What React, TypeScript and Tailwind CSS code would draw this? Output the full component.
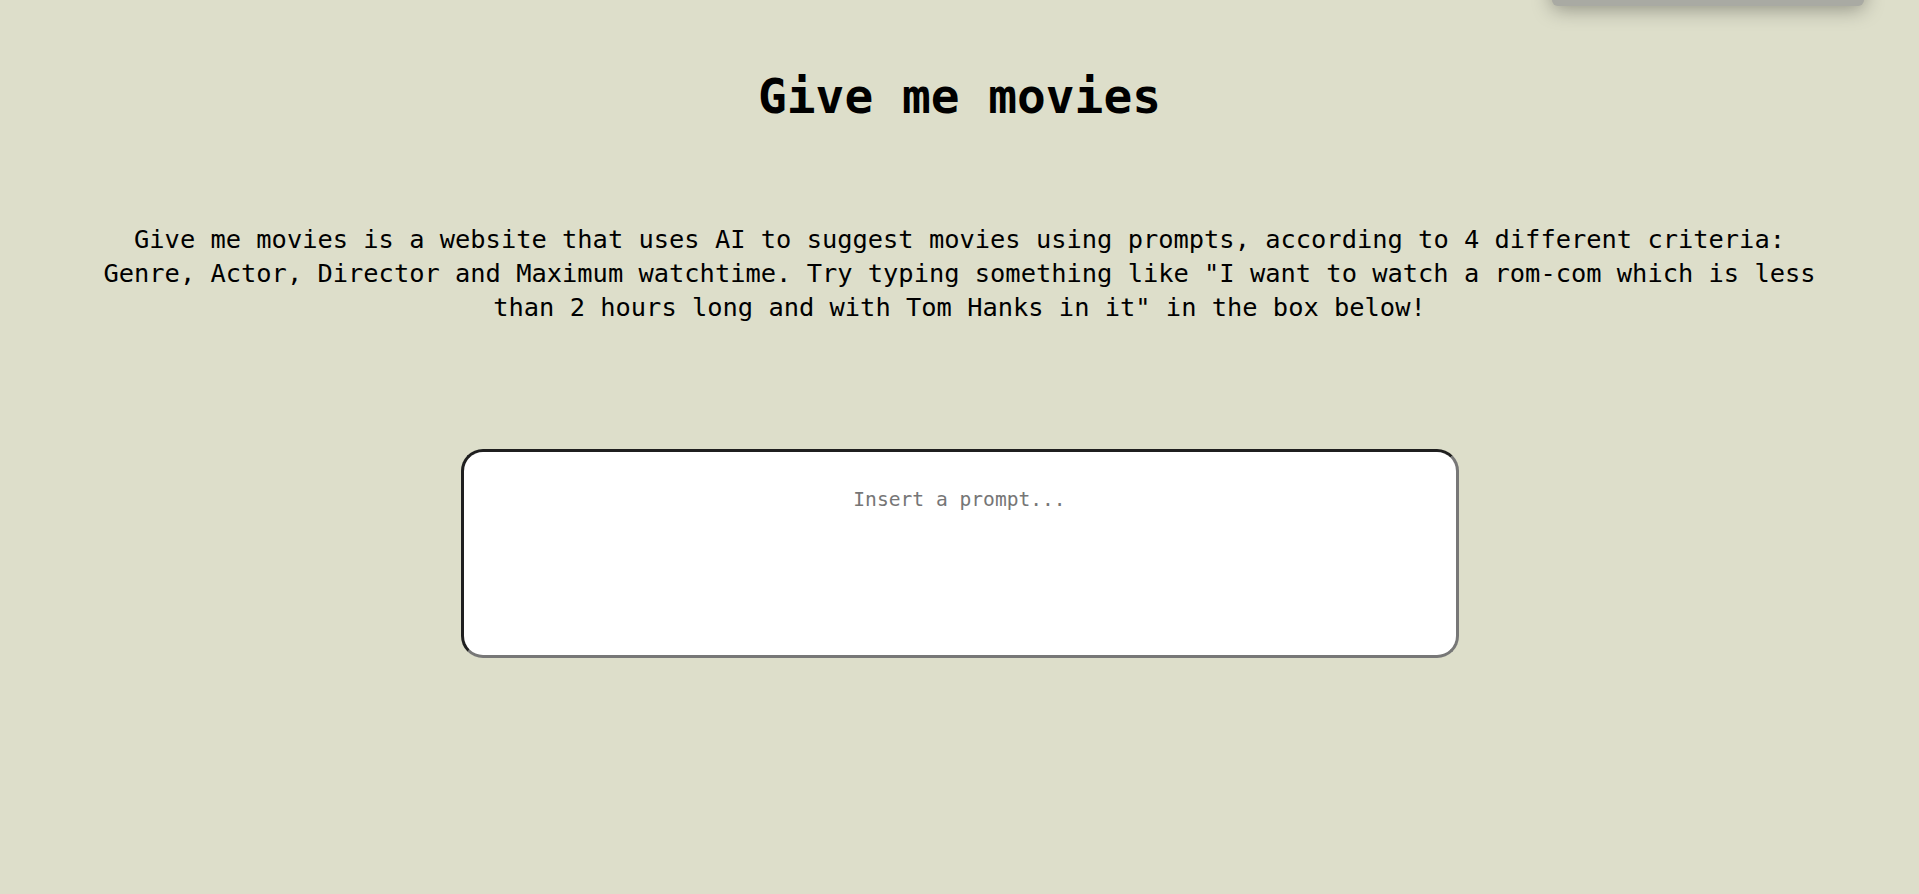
import { useState } from "react";

const mono = "font-['DejaVu_Sans_Mono','Liberation_Mono',monospace]";

const App = () => {
  const [prompt, setPrompt] = useState("");

  return (
    <div className={`relative min-h-[894px] overflow-hidden bg-[#dddeca] text-black ${mono}`}>
      {/* menu peeking down from above the viewport */}
      <div className="absolute -top-[40px] left-[1552px] h-[46px] w-[312px] rounded-md bg-[#a9aaa3] shadow-[0_3px_20px_rgba(0,0,0,0.35)]" />

      <main className="flex flex-col items-center px-[88px] pt-[69px]">
        <h1 className="text-[47.8px] leading-[56px] font-bold">Give me movies</h1>

        <p className="mt-[97px] text-center text-[25.4px] leading-[34px]">
          Give me movies is a website that uses AI to suggest movies using
          prompts, according to 4 different criteria: Genre, Actor, Director
          and Maximum watchtime. Try typing something like "I want to watch a
          rom-com which is less than 2 hours long and with Tom Hanks in it" in
          the box below!
        </p>

        <textarea
          value={prompt}
          onChange={(e) => setPrompt(e.target.value)}
          placeholder="Insert a prompt..."
          className="mt-[125px] h-[209px] w-[998px] resize-none rounded-[22px] border-[3px] border-t-[#1f1f1f] border-r-[#777777] border-b-[#777777] border-l-[#1f1f1f] bg-white px-6 pt-[36px] text-center text-[19.6px] leading-[24px] outline-none placeholder:text-[#767676]"
        />
      </main>
    </div>
  );
};

export default App;
